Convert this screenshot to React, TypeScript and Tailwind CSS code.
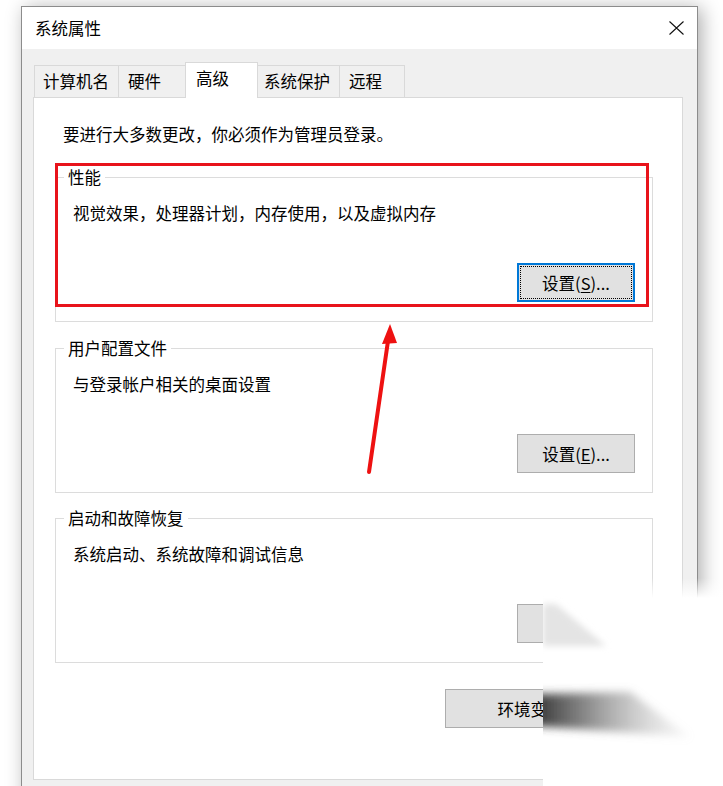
import React from 'react';

type Tab = { label: string; w: string; pl: string; active?: boolean };

const tabs: Tab[] = [
  { label: '计算机名', w: 'w-[85px]', pl: 'pl-[8px]' },
  { label: '硬件', w: 'w-[68px]', pl: 'pl-[9px]' },
  { label: '高级', w: 'w-[73px]', pl: 'pl-[10px]', active: true },
  { label: '系统保护', w: 'w-[83px]', pl: 'pl-[6px]' },
  { label: '远程', w: 'w-[66px]', pl: 'pl-[9px]' },
];

function WinButton({ label, hotkey, focused, width = 'w-[118px]' }: { label: string; hotkey: string; focused?: boolean; width?: string }) {
  return (
    <button
      className={
        width +
        ' h-[39px] bg-[#e1e1e1] text-[16.5px] leading-[22px] text-black ' +
        (focused
          ? 'border-2 border-[#0078d7] outline-1 outline-dotted outline-black -outline-offset-4'
          : 'border border-[#adadad]')
      }
    >
      {label}(<span className="underline underline-offset-2">{hotkey}</span>)...
    </button>
  );
}

function GroupBox({ title, desc, button }: { title: string; desc: string; button: React.ReactNode }) {
  return (
    <fieldset className="w-[598px] border border-[#dcdcdc]">
      <legend className="ml-[8px] px-[4px] leading-[20px]">{title}</legend>
      <p className="mt-[15px] pl-[17px] leading-[22px]">{desc}</p>
      <div className="mt-[39px] flex justify-end pr-[17px] pb-[19px]">{button}</div>
    </fieldset>
  );
}

export default function App() {
  return (
    <div className="relative h-[786px] w-[723px] overflow-hidden bg-white pl-[21px] pt-[6px] text-[16.5px] text-black font-['Noto_Sans_CJK_SC','Noto_Sans',sans-serif]">
      <div className="flex h-[800px] w-[677px] flex-col border border-[#8c8c8c] bg-[#f0f0f0] shadow-[4px_2px_18px_rgba(0,0,0,0.32)]">
        {/* title bar */}
        <div className="flex h-[42px] items-center justify-between bg-white pl-[13px] pr-[13px]">
          <span className="leading-[22px]">系统属性</span>
          <svg width="15" height="14" viewBox="0 0 15 14" className="text-[#111]">
            <path d="M0.5 0.5 L14.5 13.5 M14.5 0.5 L0.5 13.5" stroke="currentColor" strokeWidth="1.1" fill="none" />
          </svg>
        </div>

        {/* body */}
        <div className="pt-[13px] pl-[11px]">
          <div className="flex h-[35px] items-end pl-px">
            {tabs.map((t, i) => (
              <div
                key={t.label}
                className={
                  t.w +
                  ' ' +
                  t.pl +
                  ' border-l border-t border-r border-[#d9d9d9] pt-[4px] leading-[22px] ' +
                  (i > 0 ? '-ml-px ' : '') +
                  (t.active ? 'relative z-10 -mb-px h-[36px] bg-white' : 'h-[32px] bg-[#f0f0f0]')
                }
              >
                {t.label}
              </div>
            ))}
          </div>

          <div className="h-[683px] w-[650px] border border-[#d9d9d9] bg-white pl-[21px] pt-[25px]">
            <p className="ml-[8px] leading-[22px]">要进行大多数更改，你必须作为管理员登录。</p>

            <div className="mt-[22px] flex flex-col">
              <GroupBox title="性能" desc="视觉效果，处理器计划，内存使用，以及虚拟内存" button={<WinButton label="设置" hotkey="S" focused />} />
              <div className="mt-[16px]">
                <GroupBox title="用户配置文件" desc="与登录帐户相关的桌面设置" button={<WinButton label="设置" hotkey="E" />} />
              </div>
              <div className="mt-[15px]">
                <GroupBox title="启动和故障恢复" desc="系统启动、系统故障和调试信息" button={<WinButton label="设置" hotkey="T" />} />
              </div>
              <div className="mt-[26px] flex w-[598px] justify-end">
                <WinButton label="环境变量" hotkey="N" width="w-[208px]" />
              </div>
            </div>
          </div>
        </div>
      </div>

      {/* red highlight box */}
      <div className="pointer-events-none absolute left-[55px] top-[163px] h-[144px] w-[594px] border-[3px] border-[#e8131b]" />

      {/* red arrow */}
      <svg className="pointer-events-none absolute left-[360px] top-[315px]" width="40" height="165" viewBox="0 0 40 165">
        <path d="M9 157 L28 26" stroke="#ee1111" strokeWidth="4" strokeLinecap="round" fill="none" />
        <polygon points="30,9 22,29 37,28" fill="#ee1111" />
      </svg>

      {/* watermark */}
      <svg className="pointer-events-none absolute left-[536px] top-[575px]" width="187" height="211" viewBox="536 575 187 211">
        <defs>
          <linearGradient id="fadeTop" x1="0" y1="0" x2="0" y2="1">
            <stop offset="0" stopColor="#fff" stopOpacity="0" />
            <stop offset="1" stopColor="#fff" stopOpacity="1" />
          </linearGradient>
          <linearGradient id="streak" x1="0" y1="0" x2="1" y2="0">
            <stop offset="0" stopColor="#2a2a2a" stopOpacity="0.95" />
            <stop offset="0.3" stopColor="#5a5a5a" stopOpacity="0.75" />
            <stop offset="1" stopColor="#bbb" stopOpacity="0.1" />
          </linearGradient>
          <filter id="blur" x="-20%" y="-50%" width="140%" height="200%">
            <feGaussianBlur stdDeviation="4" />
          </filter>
          <filter id="soft" x="-30%" y="-30%" width="160%" height="160%">
            <feGaussianBlur stdDeviation="3" />
          </filter>
          <clipPath id="clip">
            <rect x="543" y="575" width="180" height="211" />
          </clipPath>
        </defs>
        <rect x="590" y="578" width="133" height="20" fill="url(#fadeTop)" />
        <rect x="543" y="598" width="180" height="188" fill="#fff" />
        <rect x="538" y="610" width="5" height="28" fill="#e1e1e1" />
        <g clipPath="url(#clip)">
          <polygon points="543,604 556,604 606,646 543,646" fill="#e4e4e4" filter="url(#soft)" />
          <polygon points="535,694 630,692 690,737 535,726" fill="url(#streak)" filter="url(#blur)" />
        </g>
      </svg>
    </div>
  );
}
